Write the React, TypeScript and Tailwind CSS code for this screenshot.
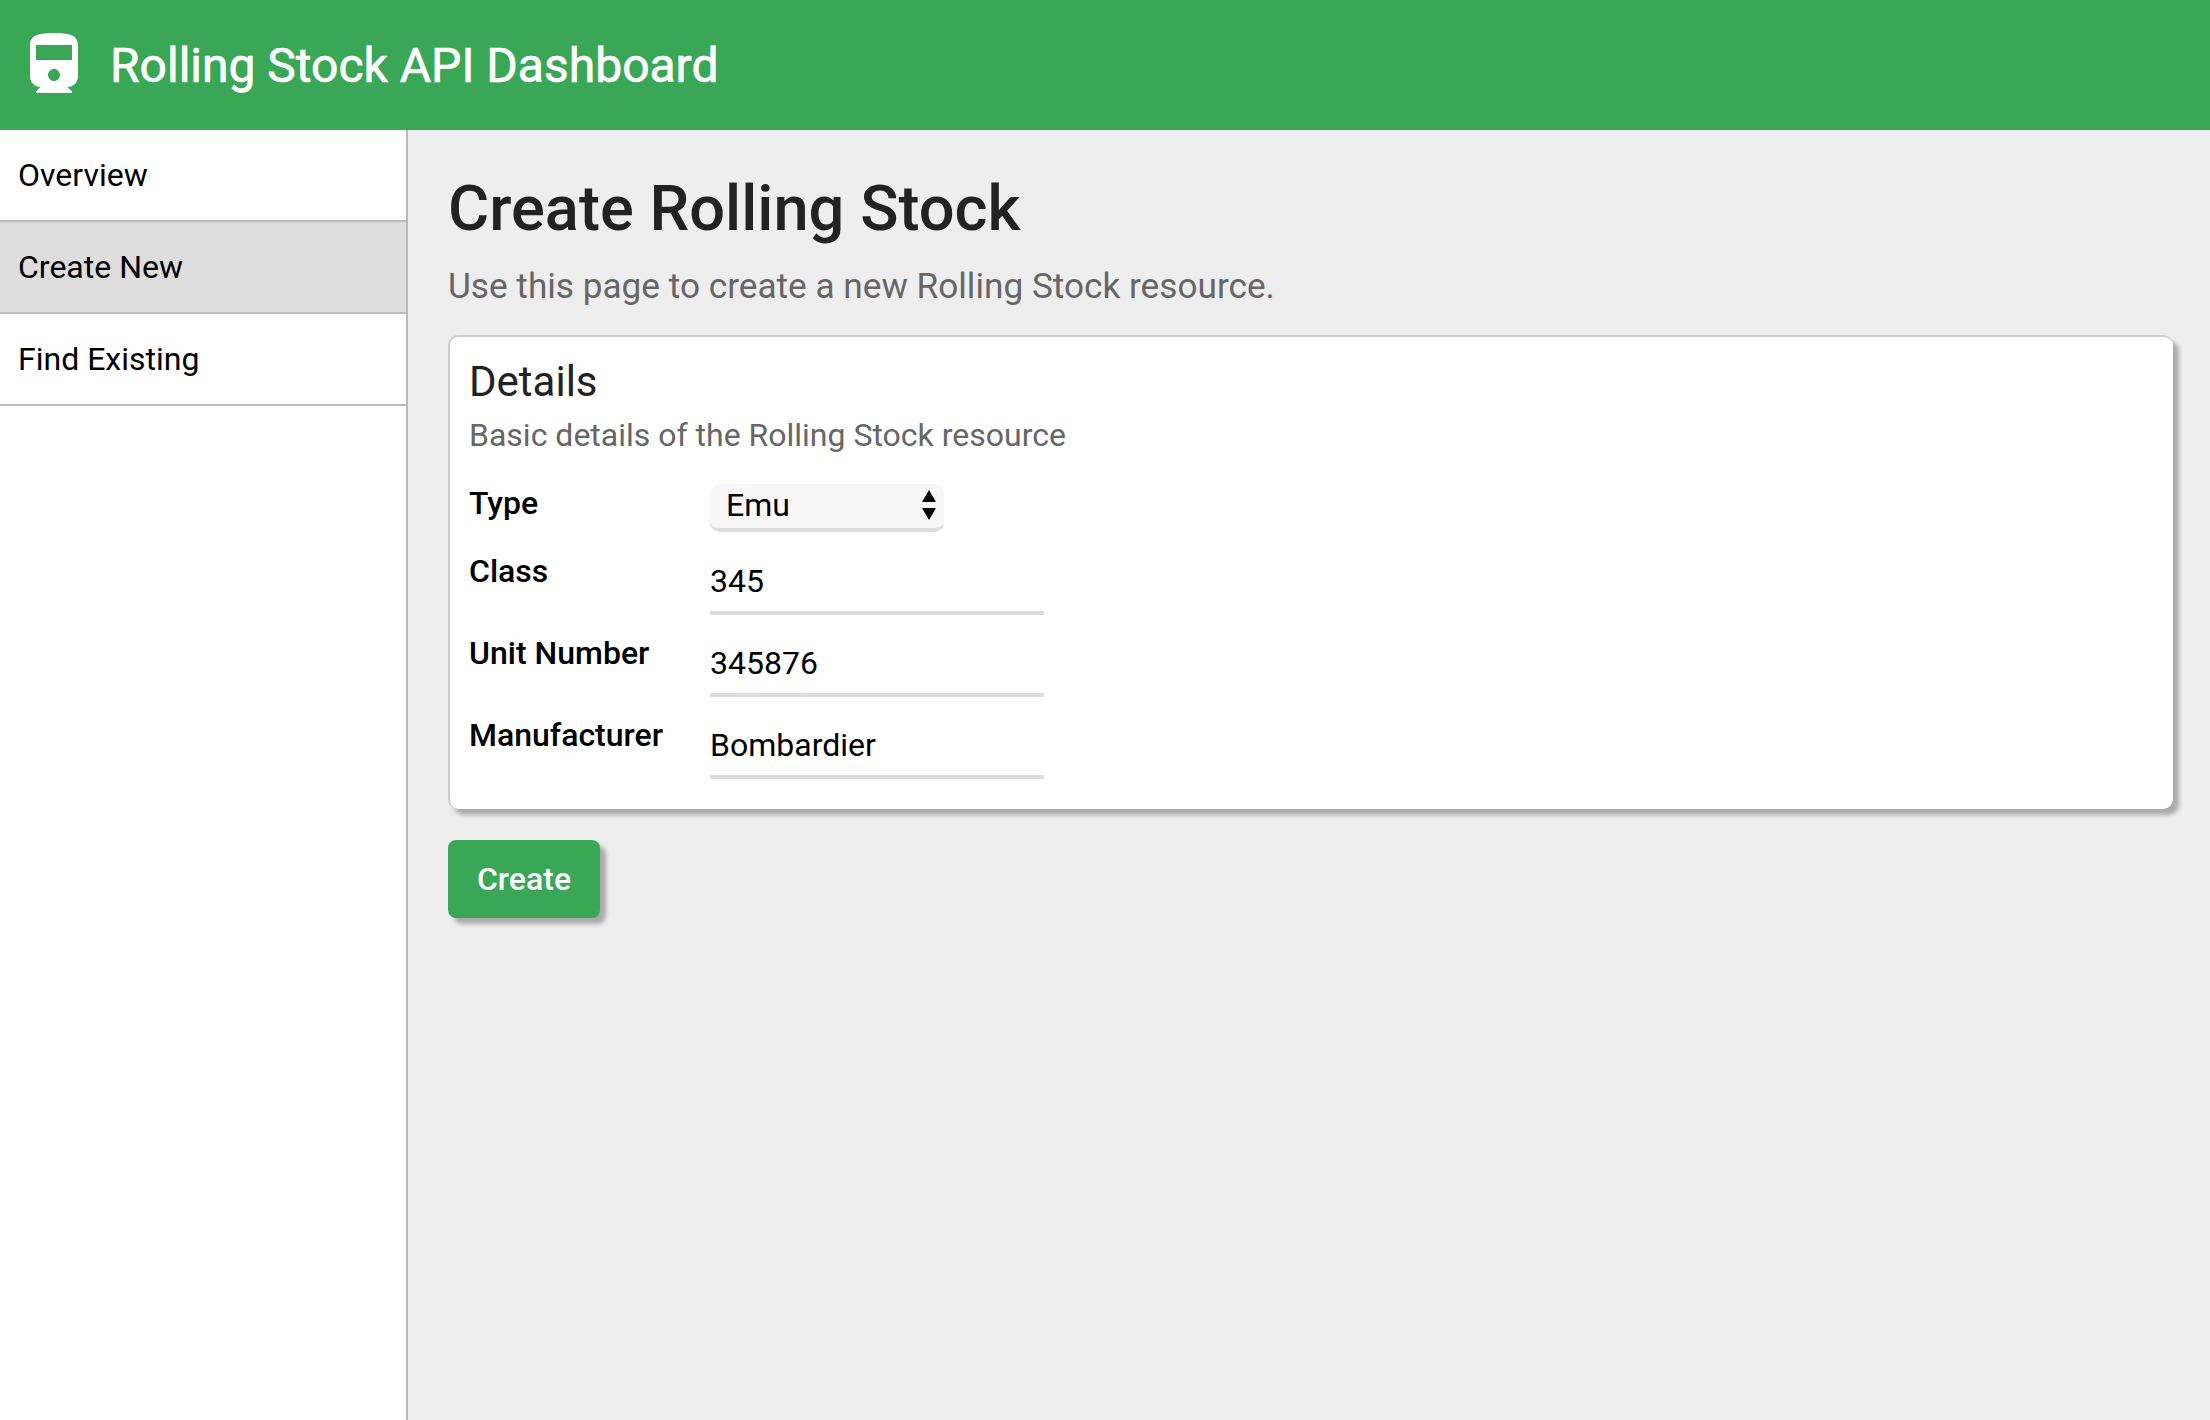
import React from "react";

const NavItem = ({ label, active }: { label: string; active?: boolean }) => (
  <a className={`flex h-[92px] items-center border-b-2 border-[#bbbbbb] pl-[18px] text-[32px] text-black ${active ? "bg-[#dddddd]" : "bg-white"}`}>
    {label}
  </a>
);

const Row = ({ label, value }: { label: string; value: string }) => (
  <div className="mt-[7px] flex items-start first:mt-[8px]">
    <label className="w-[241px] shrink-0 pt-[12px] text-[32px] font-medium leading-[38px] text-black">{label}</label>
    <input
      readOnly
      value={value}
      className="h-[75px] w-[334px] border-b-4 border-[#dddddd] bg-transparent pt-[11px] text-[32px] text-black outline-none"
    />
  </div>
);

export default function App() {
  return (
    <div className="flex h-[1420px] flex-col bg-[#eeeeee] font-['Roboto',sans-serif]">
      <header className="flex h-[130px] shrink-0 items-center bg-[#3aa757] pl-[18px] pt-[2px] text-white">
        <svg viewBox="0 0 24 24" className="h-[72px] w-[72px] fill-white">
          <path d="M4 15.5C4 17.43 5.57 19 7.5 19L6 20.5v.5h12v-.5L16.5 19c1.93 0 3.5-1.57 3.5-3.5V5c0-3.5-3.58-4-8-4s-8 .5-8 4v10.5zm8 1.5c-1.1 0-2-.9-2-2s.9-2 2-2 2 .9 2 2-.9 2-2 2zm6-7H6V5h12v5z" />
        </svg>
        <h1 className="ml-[20px] text-[48px] leading-none [-webkit-text-stroke:0.7px_white]">Rolling Stock API Dashboard</h1>
      </header>
      <div className="flex min-h-0 flex-1">
        <nav className="w-[408px] shrink-0 border-r-2 border-[#bbbbbb] bg-white">
          <NavItem label="Overview" />
          <NavItem label="Create New" active />
          <NavItem label="Find Existing" />
        </nav>
        <main className="flex-1 pl-[40px] pr-[37px]">
          <h2 className="mt-[40px] text-[63.2px] font-medium leading-[76px] text-[#222222]">Create Rolling Stock</h2>
          <p className="mt-[19px] text-[35.2px] leading-[42px] text-[#666666]">Use this page to create a new Rolling Stock resource.</p>
          <section className="mt-[28px] h-[474px] rounded-[10px] border-2 border-[#cccccc] border-b-0 border-r-0 bg-white pl-[19px] pt-[20px] shadow-[6px_6px_4px_#aaaaaa]">
            <h3 className="text-[42px] leading-[50px] text-[#222222]">Details</h3>
            <p className="mt-[9px] text-[32px] leading-[38px] text-[#666666]">Basic details of the Rolling Stock resource</p>
            <div className="mt-[30px] flex items-start">
              <label className="w-[241px] shrink-0 text-[32px] font-medium leading-[38px] text-black">Type</label>
              <div className="relative h-[48px] w-[234px] rounded-[10px] border-b-4 border-[#dddddd] bg-[#f8f8f8]">
                <select className="h-full w-full appearance-none bg-transparent pb-[2px] pl-[16px] text-[32px] leading-[38px] text-black outline-none">
                  <option>Emu</option>
                </select>
                <svg viewBox="0 0 14 30" className="absolute right-[8px] top-[6px] h-[30px] w-[14px] fill-black">
                  <path d="M7 0l7 12H0zM7 30L0 18h14z" />
                </svg>
              </div>
            </div>
            <div>
              <Row label="Class" value="345" />
              <Row label="Unit Number" value="345876" />
              <Row label="Manufacturer" value="Bombardier" />
            </div>
          </section>
          <button className="mt-[31px] h-[78px] w-[152px] rounded-[8px] bg-[#3aa757] text-[32px] font-medium text-white shadow-[6px_6px_4px_#aaaaaa]">Create</button>
        </main>
      </div>
    </div>
  );
}
